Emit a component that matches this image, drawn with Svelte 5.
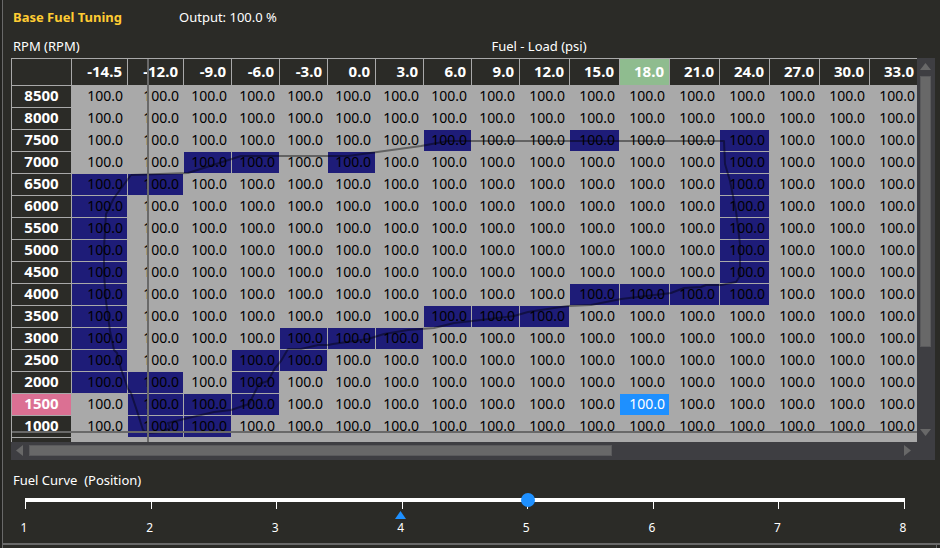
<script>
  const loads = ['-14.5', '-12.0', '-9.0', '-6.0', '-3.0', '0.0', '3.0', '6.0', '9.0', '12.0', '15.0', '18.0', '21.0', '24.0', '27.0', '30.0', '33.0'];

  // Column indexes that the engine has passed through, per RPM row
  const rows = [
    { rpm: 8500, hit: [] },
    { rpm: 8000, hit: [] },
    { rpm: 7500, hit: [7, 10, 13] },
    { rpm: 7000, hit: [2, 3, 5, 13] },
    { rpm: 6500, hit: [0, 1, 13] },
    { rpm: 6000, hit: [0, 13] },
    { rpm: 5500, hit: [0, 13] },
    { rpm: 5000, hit: [0, 13] },
    { rpm: 4500, hit: [0, 13] },
    { rpm: 4000, hit: [0, 10, 11, 12, 13] },
    { rpm: 3500, hit: [0, 7, 8, 9] },
    { rpm: 3000, hit: [0, 4, 5, 6] },
    { rpm: 2500, hit: [0, 3, 4] },
    { rpm: 2000, hit: [0, 1, 3] },
    { rpm: 1500, hit: [1, 2, 3] },
    { rpm: 1000, hit: [1, 2] }
  ];

  let selRpm = $state(1500);
  let selCol = $state(11);
  let position = $state(5);
  const positions = [1, 2, 3, 4, 5, 6, 7, 8];
  const livePosition = 4;

  function select(rpm, col) {
    selRpm = rpm;
    selCol = col;
  }

  const trace =
    'M119 116L116 120L102 139L94 155L92 189L92 215L94 242L98 272L102 291L105 294L109 310L116 330L119 334L125 352L131 371L136 374L150 373L158 369L156 364L172 360L202 353L219 351L237 345L247 325L256 322L263 309L269 302L276 290L289 290L306 286L316 286L321 285L356 280L372 275L396 271L422 269L442 264L469 261L502 257L516 253L542 249L556 247L579 246L609 240L626 238L659 234L672 229L689 228L694 226L709 226L724 223L728 217L728 185L724 152L718 122L713 105L712 82L436 82L409 87L336 97L229 97L176 114L119 116';
</script>

<main class="panel">
  <header class="title">
    <h1>Base Fuel Tuning</h1>
    <span>Output: 100.0 %</span>
  </header>

  <div class="axes">
    <span class="axis-y">RPM (RPM)</span>
    <span class="axis-x">Fuel - Load (psi)</span>
  </div>

  <section class="grid" aria-label="Base fuel table">
    <div class="view">
      <table>
        <colgroup>
          <col class="c-head" />
          {#each loads as _, c}
            <col class={c < 2 ? 'c-wide' : c < 9 ? 'c-narrow' : 'c-mid'} />
          {/each}
        </colgroup>
        <thead>
          <tr>
            <td class="corner"></td>
            {#each loads as load, c}
              <th scope="col" class:active={c === selCol}>{load}</th>
            {/each}
          </tr>
        </thead>
        <tbody>
          {#each rows as row}
            <tr>
              <th scope="row" class:active={row.rpm === selRpm}>{row.rpm}</th>
              {#each loads as _, c}
                <td
                  class:hit={row.hit.includes(c)}
                  class:selected={row.rpm === selRpm && c === selCol}
                  onclick={() => select(row.rpm, c)}>100.0</td>
              {/each}
            </tr>
          {/each}
          <tr>
            <td class="corner"></td>
            <td colspan={loads.length}></td>
          </tr>
        </tbody>
      </table>
      <svg class="trace" width="906" height="383" viewBox="0 0 906 383" aria-hidden="true">
        <path d={trace} />
      </svg>
      <div class="cross-v"></div>
      <div class="cross-h"></div>
    </div>

    <div class="bar vertical">
      <button aria-label="Scroll up"><svg width="11" height="7" viewBox="0 0 11 7"><path d="M5.5 0L11 7H0Z" /></svg></button>
      <div class="rail"><div class="thumb"></div></div>
      <button aria-label="Scroll down"><svg width="11" height="7" viewBox="0 0 11 7"><path d="M0 0H11L5.5 7Z" /></svg></button>
    </div>

    <div class="bar horizontal">
      <button aria-label="Scroll left"><svg width="7" height="11" viewBox="0 0 7 11"><path d="M7 0V11L0 5.5Z" /></svg></button>
      <div class="rail"><div class="thumb"></div></div>
      <button aria-label="Scroll right"><svg width="7" height="11" viewBox="0 0 7 11"><path d="M0 0L7 5.5L0 11Z" /></svg></button>
    </div>
    <div class="bar"></div>
  </section>

  <section class="curve">
    <label for="fuel-curve">Fuel Curve&nbsp; (Position)</label>
    <div class="slider">
      <div class="track"></div>
      <div class="scale">
        {#each positions as p}
          <div class="stop">
            <i class="tick"></i>
            <svg class="live" class:shown={p === livePosition} width="11" height="8" viewBox="0 0 11 8" aria-hidden="true"><path d="M5.5 0L11 8H0Z" /></svg>
            <span>{p}</span>
          </div>
        {/each}
      </div>
      <input id="fuel-curve" type="range" min="1" max="8" bind:value={position} />
    </div>
  </section>
</main>
<footer></footer>

<style>
  :global(body) {
    margin: 0;
    background: #232320;
  }
  :global(#app) {
    display: flex;
    flex-direction: column;
    height: 100vh;
  }
  .panel {
    flex: 1;
    min-height: 0;
    box-sizing: border-box;
    display: flex;
    flex-direction: column;
    margin-left: 2px;
    padding: 8px 5px 0 8px;
    border-left: 1px solid #696969;
    border-bottom: 2px solid #696969;
    background: #2b2b27;
    color: #fff;
    font: 13px/18px 'Noto Sans', 'Open Sans', sans-serif;
  }
  footer {
    height: 3px;
    margin: 0 3px 0 2px;
    border-left: 1px solid #696969;
    border-right: 1px solid #696969;
    background: #2b2b27;
  }
  .title {
    display: flex;
    padding-left: 2px;
    margin-bottom: 11px;
  }
  h1 {
    width: 166px;
    margin: 0;
    font-size: 13px;
    line-height: 18px;
    font-weight: 700;
    color: #ffcc33;
  }
  .axes {
    display: flex;
    padding-left: 2px;
    margin-bottom: 3px;
  }
  .axis-y {
    width: 130px;
  }
  .axis-x {
    flex: 1;
    text-align: center;
  }
  .grid {
    flex: 1;
    min-height: 0;
    display: grid;
    grid-template-columns: minmax(0, 1fr) 18px;
    grid-template-rows: minmax(0, 1fr) 18px;
  }
  .view {
    position: relative;
    overflow: hidden;
    border-top: 1px solid #a9a9a9;
    border-left: 1px solid #a9a9a9;
    background: #a9a9a9;
  }
  table {
    table-layout: fixed;
    width: 908px;
    border-collapse: separate;
    border-spacing: 0;
    font-size: 14px;
    line-height: 19px;
  }
  .c-head { width: 60px; }
  .c-wide { width: 56px; }
  .c-narrow { width: 48px; }
  .c-mid { width: 50px; }
  th,
  td {
    box-sizing: border-box;
    height: 22px;
    padding: 0 4px 2px 0;
    border-right: 1px solid #a9a9a9;
    border-bottom: 1px solid #a9a9a9;
    background: #a9a9a9;
    background-clip: padding-box;
    color: #000;
    text-align: right;
    white-space: nowrap;
    cursor: default;
  }
  thead th,
  thead td {
    height: 27px;
    padding-right: 5px;
  }
  th,
  .corner {
    background-color: #2b2b27;
    color: #fff;
    font-size: 15px;
    font-weight: 700;
  }
  tbody th {
    padding: 0 0 2px;
    text-align: center;
  }
  thead th.active { background-color: #8fbc8f; }
  tbody th.active { background-color: #db7093; }
  .hit { background-color: #1e1c78; }
  .selected {
    background-color: #1e90ff;
    color: #fff;
  }
  .trace {
    position: absolute;
    left: 0;
    top: 0;
    pointer-events: none;
  }
  .trace path {
    fill: none;
    stroke: #000;
    stroke-opacity: 0.42;
    stroke-width: 2;
    stroke-linejoin: round;
  }
  .cross-v,
  .cross-h {
    position: absolute;
    background: #696969;
    pointer-events: none;
  }
  .cross-v {
    left: 135px;
    top: 0;
    bottom: 0;
    width: 2px;
  }
  .cross-h {
    left: 0;
    right: 0;
    bottom: 9px;
    height: 2px;
  }
  .bar {
    display: flex;
    align-items: center;
    background: #3e3e42;
  }
  .vertical { flex-direction: column; }
  .bar button {
    display: flex;
    align-items: center;
    justify-content: center;
    flex: none;
    width: 18px;
    height: 18px;
    padding: 0 2px 2px 0;
    border: 0;
    background: none;
  }
  .bar path { fill: #686868; }
  .rail {
    flex: 1;
    min-width: 0;
    min-height: 0;
  }
  .thumb {
    box-sizing: border-box;
    border: 1px solid #5a5a5c;
    background: #686868;
  }
  .vertical .rail {
    width: 11px;
    margin-right: 1px;
  }
  .vertical .thumb {
    width: 11px;
    height: 78%;
  }
  .horizontal .rail {
    height: 11px;
    margin-bottom: 2px;
  }
  .horizontal .thumb {
    width: 67%;
    height: 11px;
  }
  .curve {
    padding: 11px 0 7px 2px;
  }
  label {
    display: block;
  }
  .slider {
    position: relative;
    margin: 9px 19px 0 0;
    padding: 0 11px 0 12px;
  }
  .track {
    height: 4px;
    background: #fff;
  }
  .scale {
    display: flex;
    justify-content: space-between;
  }
  .stop {
    display: flex;
    flex-direction: column;
    align-items: center;
    width: 1px;
    font-size: 12px;
    line-height: 16px;
  }
  .tick {
    width: 1px;
    height: 7px;
    background: #fff;
  }
  .live {
    flex: none;
    margin: 2px 3px 1px 0;
    visibility: hidden;
  }
  .live.shown { visibility: visible; }
  .live path { fill: #1e90ff; }
  .stop span {
    margin-right: 3px;
  }
  input {
    position: absolute;
    left: 5px;
    right: 4px;
    top: -5px;
    width: calc(100% - 9px);
    height: 14px;
    margin: 0;
    appearance: none;
    background: none;
  }
  input::-webkit-slider-thumb {
    appearance: none;
    width: 14px;
    height: 14px;
    border: 0;
    border-radius: 50%;
    background: #1e90ff;
  }
</style>
